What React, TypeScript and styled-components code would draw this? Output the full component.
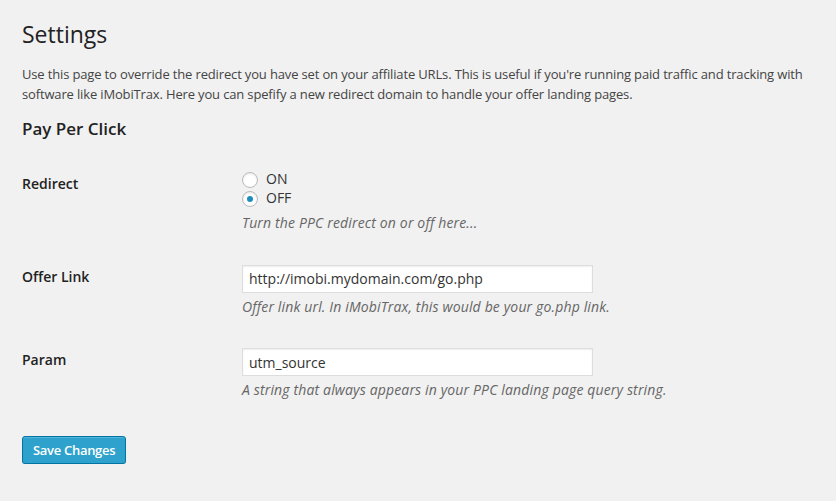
import React, { useState } from 'react'
import styled, { createGlobalStyle } from 'styled-components'

const GlobalStyle = createGlobalStyle`
  html, body {
    margin: 0;
    padding: 0;
    background: #f1f1f1;
  }
  body {
    font-family: 'Open Sans', 'Liberation Sans', sans-serif;
    font-size: 13px;
    line-height: 1.4em;
    color: #444;
  }
  * { box-sizing: border-box; }
`

export default function App() {
  const [redirect, setRedirect] = useState<'on' | 'off'>('off')
  const [offerLink, setOfferLink] = useState('http://imobi.mydomain.com/go.php')
  const [param, setParam] = useState('utm_source')

  return (
    <Wrap>
      <GlobalStyle />
      <Title>Settings</Title>
      <Intro>
        Use this page to override the redirect you have set on your affiliate URLs. This is useful if you're running paid traffic and tracking with
        <br />
        software like iMobiTrax. Here you can spefify a new redirect domain to handle your offer landing pages.
      </Intro>
      <SectionTitle>Pay Per Click</SectionTitle>

      <FormTable>
        <Row>
          <Label>Redirect</Label>
          <Field>
            <RadioList>
              <RadioLabel>
                <Radio $checked={redirect === 'on'} onClick={() => setRedirect('on')} />
                ON
              </RadioLabel>
              <RadioLabel>
                <Radio $checked={redirect === 'off'} onClick={() => setRedirect('off')} />
                OFF
              </RadioLabel>
            </RadioList>
            <Description $gap={5}>Turn the PPC redirect on or off here...</Description>
          </Field>
        </Row>

        <Row>
          <Label>Offer Link</Label>
          <Field>
            <TextInput value={offerLink} onChange={(e) => setOfferLink(e.target.value)} />
            <Description $gap={4}>Offer link url. In iMobiTrax, this would be your go.php link.</Description>
          </Field>
        </Row>

        <Row>
          <Label>Param</Label>
          <Field>
            <TextInput value={param} onChange={(e) => setParam(e.target.value)} />
            <Description $gap={4}>A string that always appears in your PPC landing page query string.</Description>
          </Field>
        </Row>
      </FormTable>

      <Submit>
        <PrimaryButton type="button">Save Changes</PrimaryButton>
      </Submit>
    </Wrap>
  )
}

const Wrap = styled.div`
  padding: 20px 10px 0 22px;
`

const Title = styled.h2`
  margin: 0;
  font-size: 23px;
  font-weight: 400;
  line-height: 29px;
  color: #222;
`

const Intro = styled.p`
  margin: 16px 0 0;
  font-size: 13px;
  line-height: 1.5;
  letter-spacing: -0.15px;
  white-space: nowrap;
`

const SectionTitle = styled.h3`
  margin: 14px 0 0;
  font-size: 17px;
  font-weight: 600;
  line-height: 22px;
  color: #222;
`

const FormTable = styled.div`
  margin-top: 15px;
  display: flex;
  flex-direction: column;
`

const Row = styled.div`
  display: grid;
  grid-template-columns: 210px 1fr;
`

const Label = styled.div`
  padding: 20px 10px 20px 0;
  font-size: 14px;
  font-weight: 600;
  line-height: 1.3;
  color: #222;
`

const Field = styled.div`
  padding: 15px 10px;
  display: flex;
  flex-direction: column;
  align-items: flex-start;
`

const RadioList = styled.div`
  display: flex;
  flex-direction: column;
`

const RadioLabel = styled.label`
  display: flex;
  align-items: center;
  gap: 8px;
  height: 19px;
  font-size: 14px;
  color: #333;
  cursor: pointer;
`

const Radio = styled.span<{ $checked: boolean }>`
  width: 16px;
  height: 16px;
  border-radius: 50%;
  border: 1px solid #bbb;
  background: #fff;
  box-shadow: inset 0 1px 2px rgba(0, 0, 0, 0.1);
  display: flex;
  align-items: center;
  justify-content: center;
  flex-shrink: 0;

  &::before {
    content: '';
    width: 6px;
    height: 6px;
    border-radius: 50%;
    background: #1e8cbe;
    display: ${({ $checked }) => ($checked ? 'block' : 'none')};
  }
`

const TextInput = styled.input`
  margin-top: 2px;
  width: 351px;
  height: 28px;
  padding: 3px 6px;
  border: 1px solid #ddd;
  background: #fff;
  box-shadow: inset 0 1px 2px rgba(0, 0, 0, 0.07);
  font-family: 'Open Sans', 'Liberation Sans', sans-serif;
  font-size: 14px;
  color: #333;
  outline: none;
`

const Description = styled.p<{ $gap: number }>`
  margin: ${({ $gap }) => $gap}px 0 0;
  font-size: 14px;
  line-height: 19.5px;
  letter-spacing: 0.15px;
  font-style: italic;
  color: #666;
`

const Submit = styled.div`
  padding-top: 21px;
`

const PrimaryButton = styled.button`
  height: 28px;
  padding: 0 10px 1px;
  border: 1px solid #0074a2;
  border-radius: 3px;
  background: #2ea2cc;
  box-shadow: inset 0 1px 0 rgba(120, 200, 230, 0.5), 0 1px 0 rgba(0, 0, 0, 0.15);
  font-family: 'Open Sans', 'Liberation Sans', sans-serif;
  font-size: 13px;
  font-weight: 600;
  letter-spacing: -0.3px;
  line-height: 26px;
  color: #fff;
  cursor: pointer;
`
